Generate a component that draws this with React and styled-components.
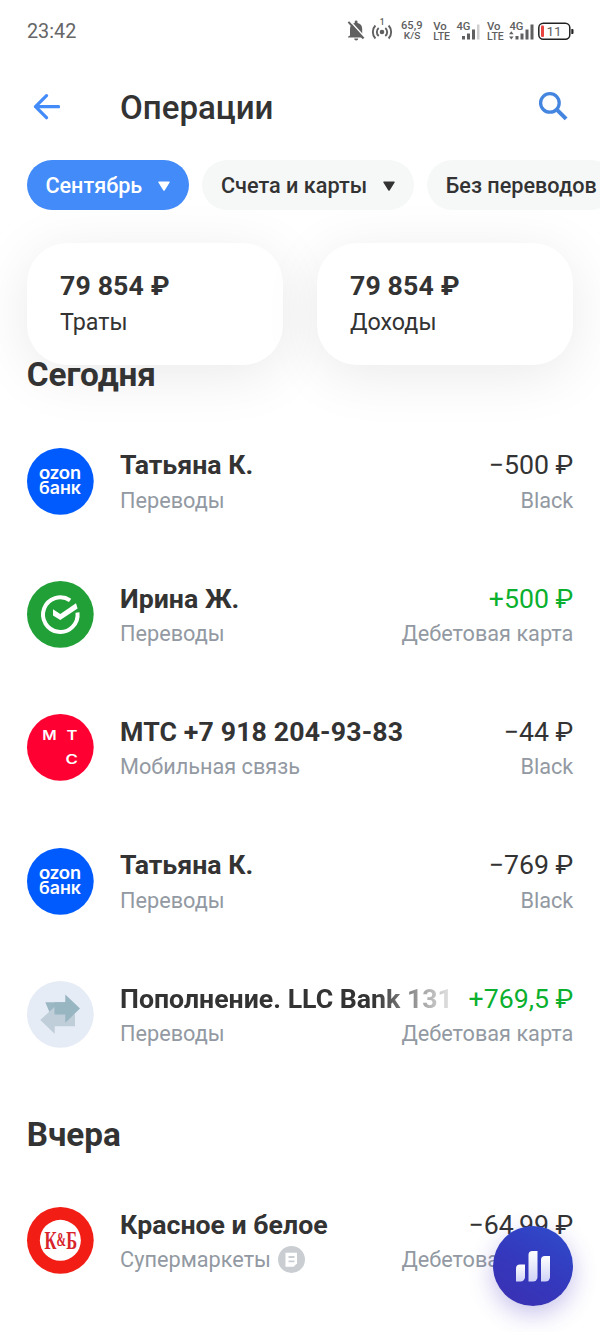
import React from 'react';
import styled, { createGlobalStyle, css } from 'styled-components';

const GlobalStyle = createGlobalStyle`
  * {
    box-sizing: border-box;
  }

  body {
    margin: 0;
    background: #fff;
    color: #333;
    font-family: Roboto, "Noto Sans", sans-serif;
    overflow: hidden;
  }
`;

const Screen = styled.div`
  position: relative;
  width: 600px;
  height: 1332px;
  overflow: hidden;
  background: #fff;
`;

const StatusBar = styled.div`
  display: flex;
  align-items: center;
  justify-content: space-between;
  height: 61px;
  padding: 0 26px 0 27px;
  color: #666;
`;

const Clock = styled.span`
  padding-top: 1px;
  font-size: 19.8px;
  line-height: 25px;
`;

const StatusIcons = styled.svg`
  display: block;
  width: 228px;
  height: 26px;
  font-family: Roboto, sans-serif;
  font-weight: 500;
  fill: #606060;
`;

const Header = styled.header`
  display: flex;
  align-items: center;
  height: 92px;
  padding: 0 32px 0 33px;
`;

const Title = styled.h1`
  flex: 1;
  margin: 2px 0 0 60px;
  font-size: 33.1px;
  font-weight: 500;
  line-height: 40px;
`;

const Chips = styled.div`
  position: relative;
  z-index: 1;
  display: flex;
  gap: 13.5px;
  margin-top: 7px;
  padding-left: 26.7px;
`;

const Chip = styled.button`
  flex: none;
  display: flex;
  align-items: center;
  gap: 15.5px;
  height: 50px;
  padding: 2px 19px 0 18.7px;
  border: 0;
  border-radius: 25px;
  background: ${({ $active }) => ($active ? '#428bf9' : '#f6f8f8')};
  color: ${({ $active }) => ($active ? '#fff' : '#333')};
  font: 500 21.65px/26px Roboto, sans-serif;
  white-space: nowrap;
`;

const Cards = styled.div`
  display: flex;
  gap: 33.3px;
  margin-top: 33.3px;
  padding: 0 26.7px;
`;

const Card = styled.div`
  flex: 1;
  height: 121.7px;
  padding: 26px 33.3px;
  border-radius: 40px;
  background: #fff;
  box-shadow: 0 10px 57px rgba(0, 0, 0, 0.085);
`;

const CardAmount = styled.div`
  font-size: 26.7px;
  font-weight: 700;
  line-height: 34px;
  letter-spacing: 0.13px;
`;

const CardLabel = styled.div`
  font-size: 23.3px;
  line-height: 38px;
`;

const SectionTitle = styled.h2`
  position: relative;
  display: flex;
  align-items: flex-end;
  height: ${({ $tucked }) => ($tucked ? '93.4px' : '92.5px')};
  margin: ${({ $tucked }) => ($tucked ? '-44px' : '0')} 0 0;
  padding: 0 26.7px 19px;
  font-size: 33.3px;
  font-weight: 700;
  line-height: 40px;
`;

const Row = styled.div`
  display: flex;
  gap: 26.7px;
  height: 133.33px;
  padding: 33.3px 26.7px 0;
`;

const Avatar = styled.svg`
  flex: none;
  width: 66.7px;
  height: 66.7px;
  overflow: visible;
`;

const RowText = styled.div`
  flex: 1;
  min-width: 0;
  margin-top: -0.3px;
`;

const RowLine = styled.div`
  display: flex;
  justify-content: space-between;
`;

const Name = styled.div`
  flex: 1;
  min-width: 0;
  overflow: hidden;
  font-size: 26.7px;
  font-weight: 700;
  line-height: 36px;
  letter-spacing: ${({ $phone }) => ($phone ? '0.13px' : 'normal')};
  white-space: nowrap;

  ${({ $faded }) =>
    $faded &&
    css`
      margin-right: 16px;
      mask-image: linear-gradient(to right, #000 calc(100% - 80px), rgba(0, 0, 0, 0.1));
    `}
`;

const Amount = styled.div`
  font-size: 26.7px;
  line-height: 36px;
  white-space: nowrap;
  color: ${({ $income }) => ($income ? '#0ab02e' : '#333')};
`;

const Details = styled.div`
  display: flex;
  align-items: center;
  gap: 7px;
  padding-top: 0.3px;
  font-size: 21.7px;
  line-height: 33px;
  color: #9299a2;
  white-space: nowrap;
`;

const Fab = styled.button`
  position: absolute;
  right: 26.7px;
  bottom: 26px;
  display: flex;
  align-items: center;
  justify-content: center;
  width: 80px;
  height: 80px;
  padding: 0;
  border: 0;
  border-radius: 50%;
  background: linear-gradient(30deg, #3b2fb2 0%, #3439bd 50%, #2f4dcd 100%);
  box-shadow: 0 8px 24px rgba(66, 50, 190, 0.3);
`;

const OzonLogo = () => (
  <Avatar viewBox="0 0 66.7 66.7">
    <circle cx="33.35" cy="33.35" r="33.35" fill="#005bff" />
    <g fill="#fff" fontFamily="Lato, sans-serif" fontSize="18.5" fontWeight="700">
      <text x="12" y="30.6" textLength="42" lengthAdjust="spacingAndGlyphs">ozon</text>
      <text x="12" y="45.6" textLength="42" lengthAdjust="spacingAndGlyphs" fontFamily="Inter, sans-serif" fontWeight="600" fontSize="17">банк</text>
    </g>
  </Avatar>
);

const SberLogo = () => (
  <Avatar viewBox="0 0 66.7 66.7">
    <circle cx="33.35" cy="33.35" r="33.35" fill="#21a038" />
    <path d="M43.1 19.4A17.3 17.3 0 1 0 50.5 31.6" fill="none" stroke="#fff" strokeWidth="4" />
    <path d="M26 28.2v6.2l7.3 4.6 17.3-11.4-1.6-5.3-15.7 10.6z" fill="#fff" />
  </Avatar>
);

const MtsLogo = () => (
  <Avatar viewBox="0 0 66.7 66.7">
    <circle cx="33.35" cy="33.35" r="33.35" fill="#ff0032" />
    <g fill="#fff" fontFamily="Inter, sans-serif" fontSize="12.6" fontWeight="600">
      <text x="15.2" y="25.7" textLength="14.4" lengthAdjust="spacingAndGlyphs">М</text>
      <text x="39.5" y="25.7" textLength="11" lengthAdjust="spacingAndGlyphs">Т</text>
      <text x="38.4" y="50.4" textLength="12.4" lengthAdjust="spacingAndGlyphs">С</text>
    </g>
  </Avatar>
);

const TransferLogo = () => (
  <Avatar viewBox="0 0 66.7 66.7">
    <circle cx="33.35" cy="33.35" r="33.35" fill="#e5ecf6" />
    <path d="M18.3 21.3H39V33.5H23.5z" fill="#9bb7c4" />
    <path d="M48 45.3H27.7v7.5L13.3 39l14.4-13.3v7.6H48z" fill="#bfced8" />
    <path d="M27.7 21.3H38.3V13.5L53 27.6 38.3 41.7V33.5H27.7z" fill="#98b5c2" />
  </Avatar>
);

const KbLogo = () => (
  <Avatar viewBox="0 0 66.7 66.7">
    <circle cx="33.35" cy="33.35" r="33.35" fill="#f21d14" />
    <circle cx="33.35" cy="33.35" r="20.5" fill="#fff" />
    <text
      x="17.6"
      y="41.7"
      fontSize="26"
      textLength="32.5"
      lengthAdjust="spacingAndGlyphs"
      fill="#d8232a"
      fontFamily="Liberation Serif, serif"
      fontWeight="700"
    >
      К<tspan fontSize="18" dy="-2.5">&amp;</tspan><tspan dy="2.5">Б</tspan>
    </text>
  </Avatar>
);

const ReceiptIcon = () => (
  <svg width="27" height="27" viewBox="0 0 27 27">
    <circle cx="13.5" cy="13.5" r="13.5" fill="#caced3" />
    <path d="M7.5 6.8H19v10.4l-3.3 3.6H7.5z" fill="#fff" />
    <path d="M10.5 11h6M10.5 15.3h6" stroke="#caced3" strokeWidth="1.8" />
  </svg>
);

const ChartIcon = () => (
  <svg width="36" height="32" viewBox="0 0 36 32">
    <defs>
      <linearGradient id="bars" x1="0" y1="0" x2="0" y2="1">
        <stop offset="0" stopColor="#fff" />
        <stop offset="1" stopColor="#d0d3f6" />
      </linearGradient>
    </defs>
    <g fill="url(#bars)">
      <path d="M5 14.5h5V27a4.5 4.5 0 0 1-4.5 4.5H1v-13a4 4 0 0 1 4-4z" />
      <path d="M17.5 1h5v26a4.5 4.5 0 0 1-4.5 4.5h-4.5V5a4 4 0 0 1 4-4z" />
      <path d="M30 6h5v21a4.5 4.5 0 0 1-4.5 4.5H26V10a4 4 0 0 1 4-4z" />
    </g>
  </svg>
);

const Caret = () => (
  <svg width="12" height="10" viewBox="0 0 12 10">
    <path d="M1 .5h10a.7.7 0 0 1 .6 1.1L6.8 9.2a1 1 0 0 1-1.6 0L.4 1.6A.7.7 0 0 1 1 .5z" fill="currentColor" />
  </svg>
);

const BackIcon = () => (
  <svg width="27" height="26" viewBox="0 0 27 26" fill="none" stroke="#428bf9" strokeWidth="3.2" strokeLinecap="round" strokeLinejoin="round">
    <path d="M13.5 1.7l-11 11 11 11M2.500 12.7h23" />
  </svg>
);

const SearchIcon = () => (
  <svg width="30" height="32" viewBox="0 0 30 32" fill="none" stroke="#4485e0">
    <circle cx="11.9" cy="11.9" r="9.3" strokeWidth="3.3" />
    <path d="M18.8 18.6l9.3 9.3" strokeWidth="4" />
  </svg>
);

const SystemIcons = () => (
  <StatusIcons viewBox="0 0 228 26">
    {/* muted bell */}
    <path d="M4 17.500v-6.500a6.200 6.200 0 0 1 4.700-6V3.800a1.400 1.400 0 0 1 2.800 0V5a6.200 6.200 0 0 1 4.700 6v5.500l2 2.300v.7H2v-.7zM8.200 20.500h4a2 2 0 0 1-4 0z" />
    <path d="M3.800 2.800L18.500 19" stroke="#fff" strokeWidth="1.6" />
    <path d="M2.4 3.800L17.500 20.500" stroke="#606060" strokeWidth="2" />
    {/* hotspot */}
    <circle cx="36" cy="14" r="2.3" />
    <g fill="none" stroke="#606060" strokeWidth="1.9">
      <path d="M32.700 10a5.200 5.200 0 0 0 0 8M39.300 10a5.200 5.200 0 0 1 0 8M29.400 7.500a9.500 9.500 0 0 0 0 13M42.600 7.500a9.500 9.500 0 0 1 0 13" />
    </g>
    <text x="33.7" y="7" fontSize="8.5">1</text>
    <text x="55" y="11" fontSize="11.5" textLength="21.5" lengthAdjust="spacingAndGlyphs">65,9</text>
    <text x="57.8" y="20.8" fontSize="9.3" textLength="16.5" lengthAdjust="spacingAndGlyphs">K/S</text>
    <text x="87.3" y="11.5" fontSize="11.3" textLength="13.5" lengthAdjust="spacingAndGlyphs">Vo</text>
    <text x="87.3" y="21.8" fontSize="11.3" textLength="16.7" lengthAdjust="spacingAndGlyphs">LTE</text>
    <text x="110.5" y="11.8" fontSize="11.8" textLength="14" lengthAdjust="spacingAndGlyphs">4G</text>
    <path d="M116 18h3v3.500h-3zM121 15.500h3v6h-3zM126 11.500h3v10h-3z" />
    <path d="M131 6.500h2.500v15H131z" opacity="0.3" />
    <text x="141" y="11.5" fontSize="11.3" textLength="13.5" lengthAdjust="spacingAndGlyphs">Vo</text>
    <text x="141" y="21.8" fontSize="11.3" textLength="16.7" lengthAdjust="spacingAndGlyphs">LTE</text>
    <text x="163.5" y="11.8" fontSize="11.8" textLength="14" lengthAdjust="spacingAndGlyphs">4G</text>
    <path d="M163 16.200l2.300-3 2.300 3zM163 18.400l2.300 3 2.300-3zM169.500 18h3v3.500h-3zM174.500 15.500h3v6h-3zM179.500 11.500h3v10h-3zM184.500 6.500h3v15h-3z" />
    {/* battery */}
    <rect x="192.8" y="5.3" width="31" height="16" rx="4.5" fill="#fff" stroke="#222" strokeWidth="1.5" />
    <rect x="195" y="7.5" width="3" height="11.6" rx="1" fill="#e8433f" />
    <path d="M225.300 11h1.200a1 1 0 0 1 1 1v3a1 1 0 0 1-1 1h-1.200z" fill="#222" />
    <text x="200.5" y="18" fontSize="13.5" fontWeight="400" textLength="15" lengthAdjust="spacing">11</text>
  </StatusIcons>
);

const filters = [
  { label: 'Сентябрь', active: true, caret: true },
  { label: 'Счета и карты', caret: true },
  { label: 'Без переводов' },
];

const today = [
  { logo: OzonLogo, name: 'Татьяна К.', category: 'Переводы', amount: '−500 ₽', account: 'Black' },
  { logo: SberLogo, name: 'Ирина Ж.', category: 'Переводы', amount: '+500 ₽', account: 'Дебетовая карта', income: true },
  { logo: MtsLogo, name: 'МТС +7 918 204-93-83', category: 'Мобильная связь', amount: '−44 ₽', account: 'Black', phone: true },
  { logo: OzonLogo, name: 'Татьяна К.', category: 'Переводы', amount: '−769 ₽', account: 'Black' },
  { logo: TransferLogo, name: 'Пополнение. LLC Bank 131', category: 'Переводы', amount: '+769,5 ₽', account: 'Дебетовая карта', income: true, faded: true },
];

const yesterday = [
  { logo: KbLogo, name: 'Красное и белое', category: 'Супермаркеты', amount: '−64,99 ₽', account: 'Дебетовая карта', receipt: true },
];

const Operation = ({ logo: Logo, name, category, amount, account, income, faded, phone, receipt }) => (
  <Row>
    <Logo />
    <RowText>
      <RowLine>
        <Name $faded={faded} $phone={phone}>{name}</Name>
        <Amount $income={income}>{amount}</Amount>
      </RowLine>
      <RowLine>
        <Details>
          {category}
          {receipt && <ReceiptIcon />}
        </Details>
        <Details>{account}</Details>
      </RowLine>
    </RowText>
  </Row>
);

const App = () => {
  return (
    <Screen>
      <GlobalStyle />
      <StatusBar>
        <Clock>23:42</Clock>
        <SystemIcons />
      </StatusBar>

      <Header>
        <BackIcon />
        <Title>Операции</Title>
        <SearchIcon />
      </Header>

      <Chips>
        {filters.map(({ label, active, caret }) => (
          <Chip key={label} $active={active}>
            {label}
            {caret && <Caret />}
          </Chip>
        ))}
      </Chips>

      <Cards>
        <Card>
          <CardAmount>79 854 ₽</CardAmount>
          <CardLabel>Траты</CardLabel>
        </Card>
        <Card>
          <CardAmount>79 854 ₽</CardAmount>
          <CardLabel>Доходы</CardLabel>
        </Card>
      </Cards>

      <SectionTitle $tucked>Сегодня</SectionTitle>
      {today.map((item, i) => (
        <Operation key={i} {...item} />
      ))}

      <SectionTitle>Вчера</SectionTitle>
      {yesterday.map((item, i) => (
        <Operation key={i} {...item} />
      ))}

      <Fab>
        <ChartIcon />
      </Fab>
    </Screen>
  );
};

export default App;
